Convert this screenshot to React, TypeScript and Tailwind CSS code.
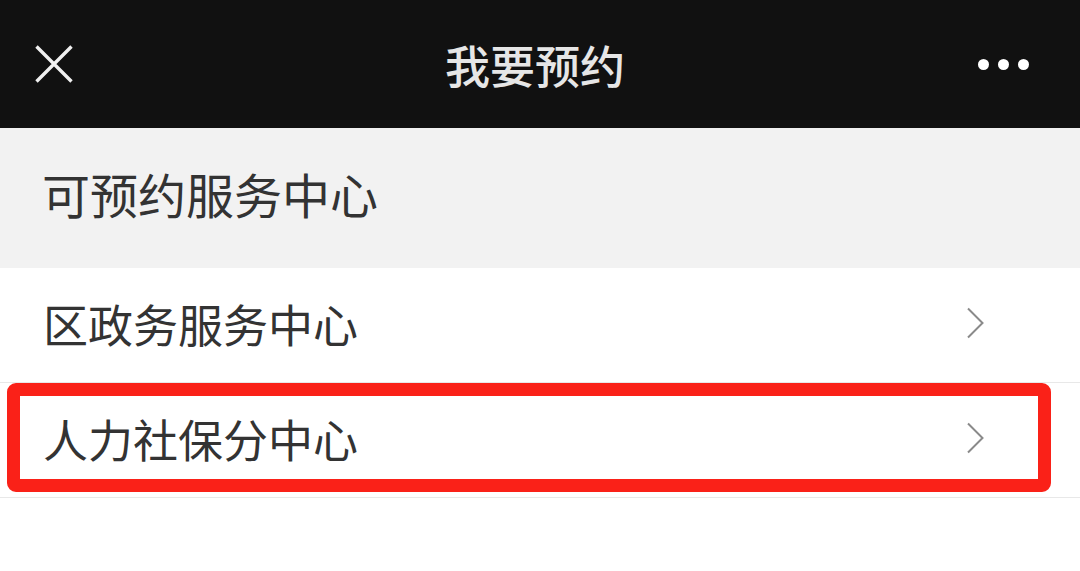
const centers = ["区政务服务中心", "人力社保分中心"];

function Chevron() {
  return (
    <svg width="20" height="32" viewBox="0 0 20 32" fill="none">
      <path d="M3 1.5L17.5 16L3 30.5" stroke="#8a8a8a" strokeWidth="2" />
    </svg>
  );
}

export default function App() {
  return (
    <div
      className="w-[1080px] h-[571px] bg-white overflow-hidden"
      style={{ fontFamily: '"Noto Sans CJK SC", "Noto Sans", sans-serif' }}
    >
      {/* Top bar */}
      <div className="h-[128px] bg-[#111111] flex items-center justify-between px-[35px]">
        <svg width="38" height="38" viewBox="0 0 38 38">
          <path d="M1.5 1.5L36.5 36.5M36.5 1.5L1.5 36.5" stroke="#f0f0f0" strokeWidth="3.4" />
        </svg>
        <div className="text-[45px] leading-none text-[#e6e6e6] font-medium ml-[19px]">我要预约</div>
        <div className="flex items-center gap-[9px] pr-[16px]">
          <span className="w-[11px] h-[11px] rounded-full bg-white" />
          <span className="w-[11px] h-[11px] rounded-full bg-white" />
          <span className="w-[11px] h-[11px] rounded-full bg-white" />
        </div>
      </div>

      {/* Section header */}
      <div className="h-[140px] bg-[#f2f2f2] flex items-center pl-[42px] pb-[10px]">
        <span className="text-[48px] leading-none text-[#333333]">可预约服务中心</span>
      </div>

      {/* List */}
      <div>
        {centers.map((name, i) => (
          <div
            key={name}
            className="relative h-[115px] flex items-center justify-between pl-[43px] pr-[95px] pb-[4px] border-b border-[#e8e8e8]"
          >
            <span className="text-[45px] leading-none text-[#333333]">{name}</span>
            <Chevron />
            {i === 1 && (
              <div className="absolute left-[7px] top-[0px] w-[1044px] h-[109px] border-[13px] border-[#fa2118] rounded-[9px] pointer-events-none" />
            )}
          </div>
        ))}
      </div>
    </div>
  );
}
